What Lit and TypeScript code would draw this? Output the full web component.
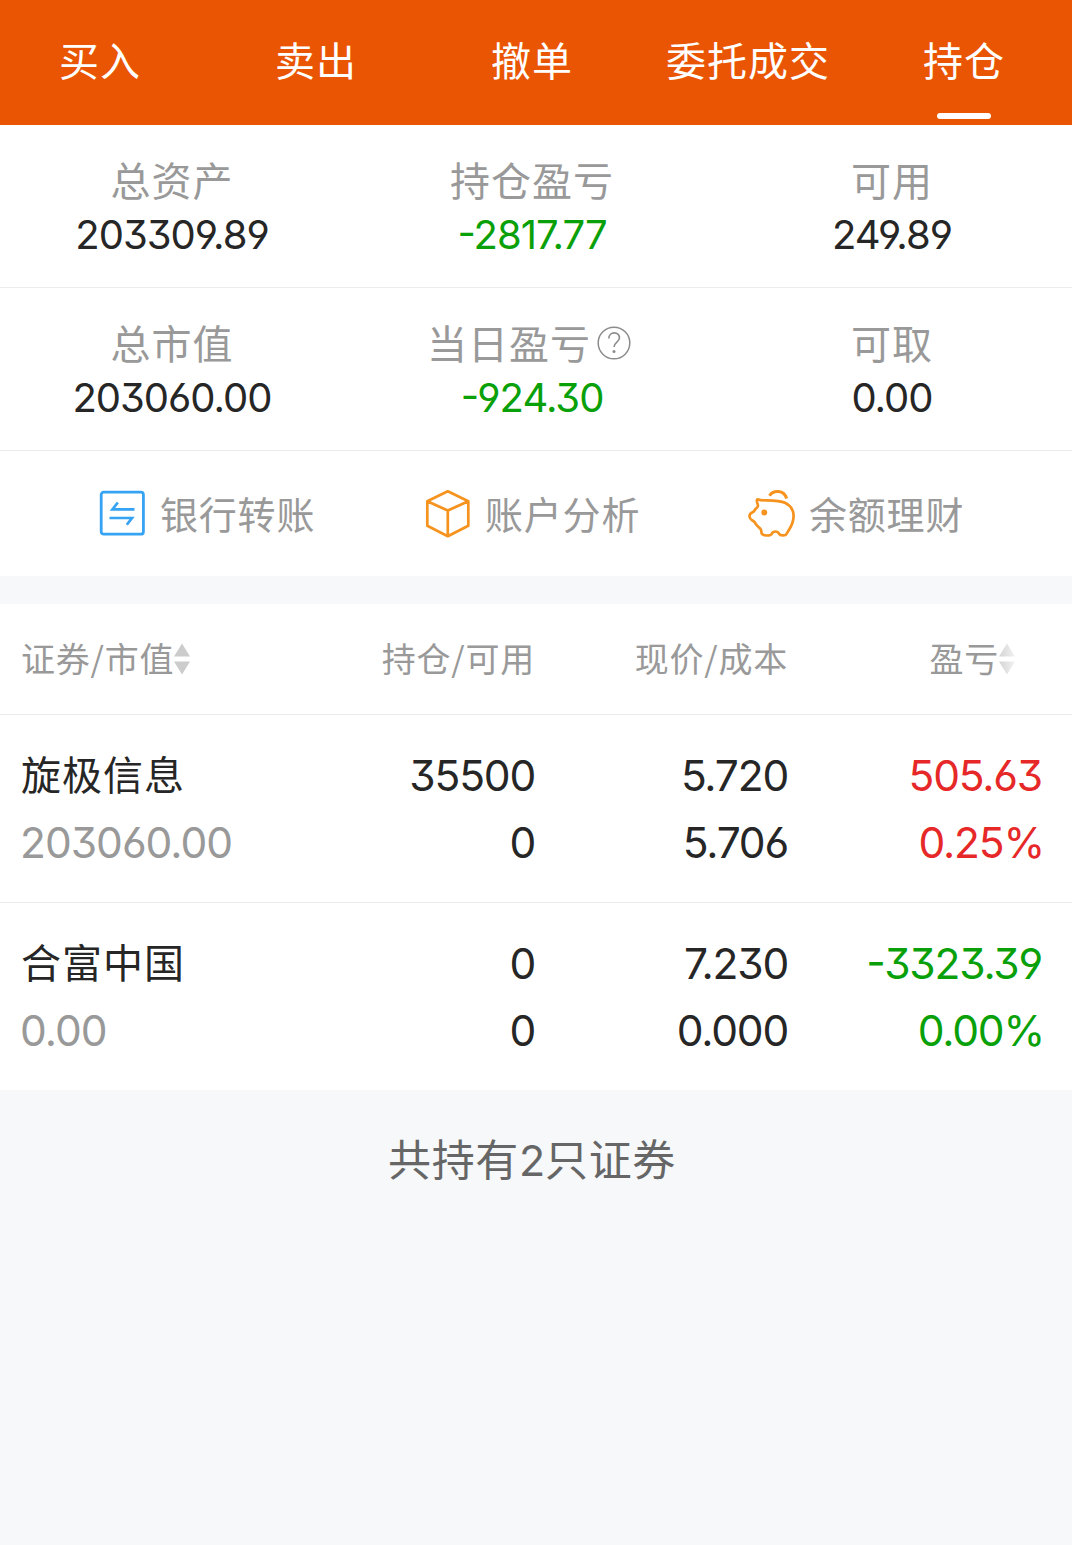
import { LitElement, html, css, svg } from "lit";
import { customElement } from "lit/decorators.js";
import { classMap } from "lit/directives/class-map.js";

type Tone = "up" | "down" | "plain";

const TABS = ["买入", "卖出", "撤单", "委托成交", "持仓"];

const SUMMARY: { label: string; value: string; tone: Tone; help?: boolean }[][] = [
  [
    { label: "总资产", value: "203309.89", tone: "plain" },
    { label: "持仓盈亏", value: "-2817.77", tone: "down" },
    { label: "可用", value: "249.89", tone: "plain" },
  ],
  [
    { label: "总市值", value: "203060.00", tone: "plain" },
    { label: "当日盈亏", value: "-924.30", tone: "down", help: true },
    { label: "可取", value: "0.00", tone: "plain" },
  ],
];

const HOLDINGS: {
  name: string; market: string; held: string; free: string;
  price: string; cost: string; gain: string; rate: string; tone: Tone;
}[] = [
  { name: "旋极信息", market: "203060.00", held: "35500", free: "0", price: "5.720", cost: "5.706", gain: "505.63", rate: "0.25%", tone: "up" },
  { name: "合富中国", market: "0.00", held: "0", free: "0", price: "7.230", cost: "0.000", gain: "-3323.39", rate: "0.00%", tone: "down" },
];

const transferIcon = svg`
  <rect x="2.2" y="3.2" width="42.2" height="42" rx="2.500" stroke="#36a3f3" stroke-width="2.800"/>
  <path d="M35.500 20.300H13.500L18.800 13.500" stroke="#36a3f3" stroke-width="2.700"/>
  <path d="M10.500 29H33L27.800 35.800" stroke="#36a3f3" stroke-width="2.700"/>`;

const cubeIcon = svg`
  <path d="M23.800 2.300L44.300 12.300V36.800L23.800 47.200L3.300 36.800V12.300Z M3.300 12.300L23.800 21.600L44.300 12.300 M23.800 21.600V47.200" stroke="#f6931e" stroke-width="2.700" stroke-linejoin="round"/>`;

const pigIcon = svg`
  <path d="M12.400 11.200C21 11.600 31 11 37 13.800C43.500 17 46.300 22.500 45.400 29.500C44.500 37 40.500 41.200 38.600 44.800C37.600 46.700 32.500 47.200 31.200 45C30.200 43 29.200 42.500 27.500 42.500C25.800 42.500 24.500 43.100 23.700 44.800C22.500 47.200 14.800 47 13.800 44.600C13 43 13.800 41.500 12.400 39.800C10.400 37.700 8 36.500 6.800 33.600C5.800 31.200 1.800 31.400 1.600 28V26.200C1.800 23.600 5.600 23.600 6.600 21.400C7.400 19.600 9.900 18.600 10 16.800C10.100 15.200 7.700 11.200 9.300 10.500C10.300 10.100 11.400 10.700 12.400 11.200Z" stroke="#f6931e" stroke-width="2.700" stroke-linejoin="round"/>
  <path d="M21.500 6.800C25 .8 36 .4 38.600 9.500" stroke="#f6931e" stroke-width="3"/>
  <circle cx="16.300" cy="23.500" r="2.900" fill="#f6931e"/>`;

const ACTIONS = [
  { label: "银行转账", icon: transferIcon, cls: "first" },
  { label: "账户分析", icon: cubeIcon, cls: "second" },
  { label: "余额理财", icon: pigIcon, cls: "third" },
];

@customElement("app-root")
export class AppRoot extends LitElement {
  static styles = css`
    :host {
      display: flex;
      flex-direction: column;
      height: 1545px;
      overflow: hidden;
      background: #f7f8fa;
      color: #262626;
      font-family: "Noto Sans CJK SC", sans-serif;
      white-space: nowrap;
    }
    .num {
      font-family: Inter, "Noto Sans CJK SC", sans-serif;
      font-feature-settings: "cv09", "cv03", "cv04", "case", "calt" 0;
      letter-spacing: -1px;
    }
    .tabs {
      display: grid;
      grid-template-columns: repeat(5, 216px);
      height: 125px;
      background: #ea5504;
      color: #fff;
    }
    .tab {
      display: flex;
      flex-direction: column;
      align-items: center;
      justify-content: space-between;
      padding: 29px 0 6px;
      box-sizing: border-box;
      margin: 0 8px 0 -8px;
      font-size: 40px;
      letter-spacing: 1px;
      line-height: 60px;
    }
    .bar { width: 54px; height: 6px; border-radius: 3px; background: #fff; }
    .panel { background: #fff; }
    .summary {
      display: grid;
      grid-template-columns: repeat(3, 360px);
      height: 162px;
      border-bottom: 1px solid #ececec;
    }
    .stat {
      display: flex;
      flex-direction: column;
      align-items: center;
      margin: 0 8px 0 -8px;
      padding-top: 24px;
    }
    .label {
      display: flex;
      align-items: center;
      gap: 6px;
      height: 60px;
      color: #999;
      font-size: 40px;
      letter-spacing: 1px;
    }
    .help { width: 34px; height: 34px; margin: 2px 6px 0 0; }
    .value { font-size: 40px; line-height: 50px; padding-top: 1px; }
    .actions {
      display: flex;
      height: 125px;
      align-items: center;
      color: #999;
      font-size: 38px;
      letter-spacing: 0.8px;
    }
    .action { display: flex; align-items: center; gap: 13px; flex: none; }
    .action span { margin-top: -3px; }
    .icon { width: 48px; height: 50px; }
    .first { padding-left: 99px; width: 325px; }
    .second { width: 324px; }
    .table { margin-top: 28px; }
    .row {
      display: grid;
      grid-template-columns: 1fr 256px 253px 254px;
      padding: 0 30px 0 21px;
    }
    .head {
      height: 110px;
      border-bottom: 1px solid #ececec;
      color: #999;
      font-size: 34px;
      letter-spacing: 0.8px;
      line-height: 108px;
      text-align: right;
    }
    .sortable { display: flex; align-items: center; height: 108px; }
    .end { justify-content: flex-end; padding-right: 27px; }
    .sort { width: 16px; height: 32px; margin-top: 2px; }
    .holding { height: 187px; font-size: 42.5px; box-sizing: border-box; padding-top: 27px; }
    .holding + .holding { border-top: 1px solid #ececec; height: 188px; }
    .cell {
      display: flex;
      flex-direction: column;
      align-items: flex-end;
      line-height: 67px;
    }
    .cell.num { letter-spacing: -1.2px; }
    .lead { align-items: flex-start; }
    .lead .num { margin-left: -1px; }
    .name { font-size: 40px; letter-spacing: 1px; margin-top: -2px; padding-bottom: 2px; }
    .rate { margin-right: -2px; }
    .muted { color: #999; }
    .up { color: #e62828; }
    .down { color: #09a009; }
    .total {
      margin: 32px 8px 0 0;
      text-align: center;
      color: #666;
      font-size: 43px;
      letter-spacing: 0.6px;
      line-height: 70px;
    }
    .total .num { letter-spacing: 0; }
  `;

  private sortIcon(faded: boolean) {
    return html`<svg class="sort" viewBox="0 0 16 32">
      <defs>
        <linearGradient id="fade"><stop offset="0" stop-color="#d4d4d4"/><stop offset="1" stop-color="#f2f2f2"/></linearGradient>
      </defs>
      <path d="M8 .5L16 13.500H0Z M0 18.500H16L8 31.500Z" fill=${faded ? "url(#fade)" : "#ccc"} />
    </svg>`;
  }

  render() {
    return html`
      <nav class="tabs">
        ${TABS.map((t) => html`<div class="tab"><span>${t}</span>${t === "持仓" ? html`<i class="bar"></i>` : null}</div>`)}
      </nav>
      <section class="panel">
        ${SUMMARY.map((line) => html`<div class="summary">
          ${line.map((s) => html`<div class="stat">
            <div class="label"><span>${s.label}</span>${s.help
              ? html`<svg class="help" viewBox="0 0 34 34" fill="none" stroke="#8c8c8c">
                  <circle cx="17" cy="17" r="15.800" stroke-width="1.500"/>
                  <path d="M11.800 12.600C11.800 5 22.800 5 22.400 12.200C22.100 16 17 16.300 17 21" stroke-width="1.600"/>
                  <circle cx="17" cy="25.500" r="1.500" fill="#8c8c8c" stroke="none"/>
                </svg>`
              : null}</div>
            <div class=${classMap({ value: true, num: true, [s.tone]: true })}>${s.value}</div>
          </div>`)}
        </div>`)}
        <div class="actions">
          ${ACTIONS.map((a) => html`<div class="action ${a.cls}">
            <svg class="icon" viewBox="0 0 48 50" fill="none">${a.icon}</svg><span>${a.label}</span>
          </div>`)}
        </div>
      </section>
      <section class="panel table">
        <div class="row head">
          <div class="sortable"><span>证券/市值</span>${this.sortIcon(false)}</div>
          <div>持仓/可用</div>
          <div>现价/成本</div>
          <div class="sortable end"><span>盈亏</span>${this.sortIcon(true)}</div>
        </div>
        ${HOLDINGS.map((h) => html`<div class="row holding">
          <div class="cell lead"><span class="name">${h.name}</span><span class="num muted">${h.market}</span></div>
          <div class="cell num"><span>${h.held}</span><span>${h.free}</span></div>
          <div class="cell num"><span>${h.price}</span><span>${h.cost}</span></div>
          <div class="cell num ${h.tone}"><span>${h.gain}</span><span class="rate">${h.rate}</span></div>
        </div>`)}
      </section>
      <div class="total">共持有<span class="num">2</span>只证券</div>
    `;
  }
}
